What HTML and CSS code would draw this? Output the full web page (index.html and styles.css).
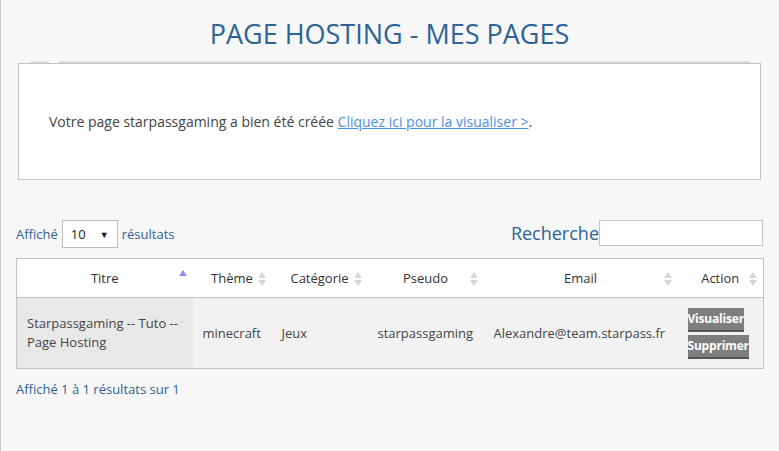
FILE: index.html
```html
<!DOCTYPE html>
<html lang="fr">
<head>
<meta charset="utf-8">
<title>Page Hosting - Mes pages</title>
<link rel="stylesheet" href="styles.css">
</head>
<body>
<div class="page">
  <h1 class="title">PAGE HOSTING - MES PAGES</h1>
  <div class="tabline"><span class="tabgap"></span></div>
  <div class="notice">
    Votre page starpassgaming a bien été créée <a href="#" class="link">Cliquez ici pour la visualiser &gt;</a>.
  </div>

  <div class="controls">
    <div class="length">
      <span class="label">Affiché</span>
      <span class="select"><span class="select-val">10</span><span class="select-arrow">▼</span></span>
      <span class="label">résultats</span>
    </div>
    <div class="search">
      <span class="search-label">Recherche</span>
      <span class="search-input"></span>
    </div>
  </div>

  <table class="grid">
    <colgroup>
      <col class="c1"><col class="c2"><col class="c3"><col class="c4"><col class="c5"><col class="c6">
    </colgroup>
    <thead>
      <tr>
        <th><span class="th-text">Titre</span><span class="sort-asc"></span></th>
        <th><span class="th-text">Thème</span><span class="sort"><i class="up"></i><i class="down"></i></span></th>
        <th><span class="th-text">Catégorie</span><span class="sort"><i class="up"></i><i class="down"></i></span></th>
        <th><span class="th-text">Pseudo</span><span class="sort"><i class="up"></i><i class="down"></i></span></th>
        <th><span class="th-text">Email</span><span class="sort"><i class="up"></i><i class="down"></i></span></th>
        <th><span class="th-text">Action</span><span class="sort"><i class="up"></i><i class="down"></i></span></th>
      </tr>
    </thead>
    <tbody>
      <tr>
        <td class="sorted">Starpassgaming -- Tuto -- Page Hosting</td>
        <td>minecraft</td>
        <td>Jeux</td>
        <td>starpassgaming</td>
        <td>Alexandre@team.starpass.fr</td>
        <td class="actions">
          <span class="btn">Visualiser</span>
          <span class="btn">Supprimer</span>
        </td>
      </tr>
    </tbody>
  </table>

  <div class="info">Affiché 1 à 1 résultats sur 1</div>
</div>
</body>
</html>
```
FILE: styles.css
```css
html, body {
  margin: 0;
  padding: 0;
  background: #f7f7f7;
}
.page {
  box-sizing: border-box;
  width: 780px;
  min-height: 451px;
  border-left: 1px solid #c9c9c9;
  border-right: 1px solid #c9c9c9;
  padding: 0 16px 0 15px;
  font-family: "Open Sans", "Noto Sans", sans-serif;
  color: #444;
}
.title {
  margin: 0;
  padding-top: 16px;
  height: 61px;
  box-sizing: border-box;
  font-size: 27px;
  line-height: 36px;
  font-weight: 400;
  text-align: center;
  color: #2d6396;
}
.tabline {
  height: 2px;
  margin: 0 13px 0 15px;
  background: #dcdcdc;
  position: relative;
}
.tabgap {
  position: absolute;
  left: 18px;
  top: 0;
  width: 10px;
  height: 2px;
  background: #fff;
}
.notice {
  margin: 0 2px;
  height: 117px;
  box-sizing: border-box;
  background: #fff;
  border: 1px solid #c3c3c3;
  padding: 47px 30px 0;
  font-size: 14px;
  line-height: 22px;
  color: #444;
}
.link {
  color: #4c8fe6;
  text-decoration: underline;
}
.controls {
  display: flex;
  justify-content: space-between;
  align-items: center;
  margin-top: 40px;
  height: 28px;
}
.length {
  display: flex;
  align-items: center;
  gap: 4px;
}
.label {
  font-size: 13px;
  color: #2d6396;
}
.select {
  box-sizing: border-box;
  width: 56px;
  height: 28px;
  display: flex;
  align-items: center;
  justify-content: space-between;
  padding: 0 8px 0 8px;
  border: 1px solid #bdbdbd;
  background: #fff;
  font-size: 13px;
  color: #222;
}
.select-arrow {
  font-size: 9px;
  color: #111;
}
.search {
  display: flex;
  align-items: center;
}
.search-label {
  font-size: 18px;
  line-height: 24px;
  margin-bottom: 3px;
  color: #2d6396;
}
.search-input {
  box-sizing: border-box;
  width: 164px;
  height: 26px;
  margin-bottom: 2px;
  border: 1px solid #c3c3c3;
  background: #fff;
}
.grid {
  margin-top: 10px;
  width: 747px;
  border-collapse: collapse;
  table-layout: fixed;
  border: 1px solid #c3c3c3;
  font-size: 13px;
}
.c1 { width: 176px; }
.c2 { width: 79px; }
.c3 { width: 96px; }
.c4 { width: 116px; }
.c5 { width: 194px; }
.c6 { width: 86px; }
.grid th {
  position: relative;
  height: 38px;
  padding: 0 10px;
  background: #fff;
  font-weight: 400;
  color: #333;
  text-align: center;
  border-bottom: 1px solid #c3c3c3;
}
.sort-asc {
  position: absolute;
  right: 6px;
  top: 11px;
  width: 0;
  height: 0;
  border-left: 4px solid transparent;
  border-right: 4px solid transparent;
  border-bottom: 6px solid #8e8ef2;
}
.sort {
  position: absolute;
  right: 6px;
  top: 13px;
  display: flex;
  flex-direction: column;
  gap: 2px;
}
.sort .up {
  width: 0;
  height: 0;
  border-left: 4px solid transparent;
  border-right: 4px solid transparent;
  border-bottom: 6px solid #d6d6d6;
}
.sort .down {
  width: 0;
  height: 0;
  border-left: 4px solid transparent;
  border-right: 4px solid transparent;
  border-top: 6px solid #d6d6d6;
}
.grid td {
  height: 71px;
  box-sizing: border-box;
  padding: 8px 10px;
  background: #f2f2f2;
  color: #444;
  line-height: 19px;
  vertical-align: middle;
}
.grid td.sorted {
  background: #e8e8e8;
}
.actions {
  text-align: left;
}
.btn {
  display: table;
  white-space: nowrap;
  box-sizing: border-box;
  padding: 0 4px;
  height: 24px;
  line-height: 22px;
  margin: 0 0 3px 0;
  background: #7e7e7e;
  border-bottom: 2px solid #555;
  color: #fff;
  font-weight: 700;
  font-size: 12px;
  letter-spacing: -0.2px;
}
.btn:last-child {
  margin-bottom: 0;
}
.info {
  margin-top: 11px;
  font-size: 13px;
  color: #2d6396;
}
```
